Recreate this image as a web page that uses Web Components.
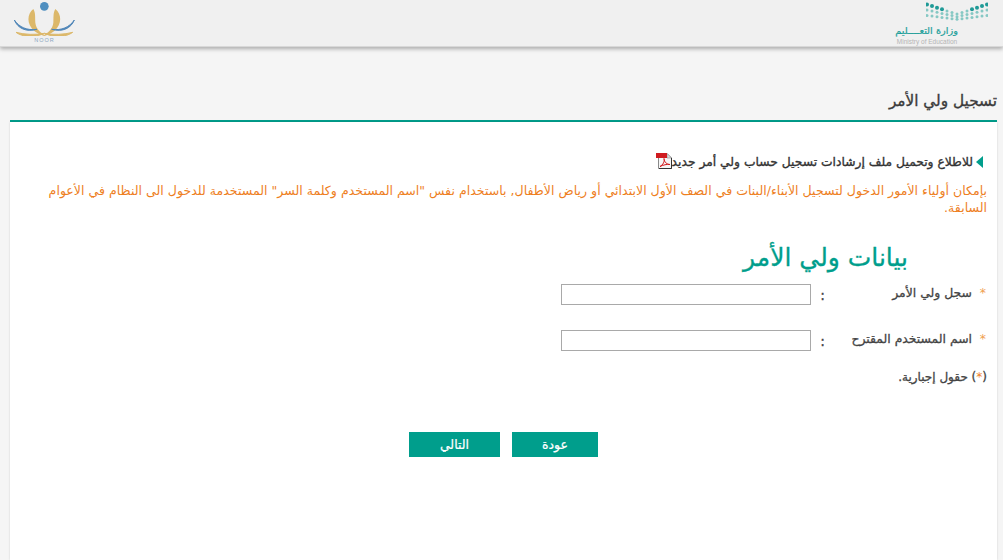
<!DOCTYPE html>
<html lang="ar" dir="rtl">
<head>
<meta charset="utf-8">
<title>تسجيل ولي الأمر</title>
<style>
  html, body { margin: 0; height: 100%; }
  body {
    background: #f5f5f5;
    font-family: "DejaVu Sans", "Noto Sans", sans-serif;
    font-size: 12px;
    color: #3b3b3b;
    overflow: hidden;
  }
</style>
</head>
<body>
<site-header></site-header>
<page-panel heading="تسجيل ولي الأمر">
  <guide-link>للاطلاع وتحميل ملف إرشادات تسجيل حساب ولي أمر جديد</guide-link>
  <p-note>بإمكان أولياء الأمور الدخول لتسجيل الأبناء/البنات في الصف الأول الابتدائي أو رياض الأطفال, باستخدام نفس "اسم المستخدم وكلمة السر" المستخدمة للدخول الى النظام في الأعوام السابقة.</p-note>
  <form-heading>بيانات ولي الأمر</form-heading>
  <form-row label="سجل ولي الأمر"></form-row>
  <form-row label="اسم المستخدم المقترح"></form-row>
  <required-hint></required-hint>
  <form-actions>
    <action-button>عودة</action-button>
    <action-button wide>التالي</action-button>
  </form-actions>
</page-panel>

<script>
class SiteHeader extends HTMLElement {
  connectedCallback() {
    if (this.shadowRoot) return;
    // ministry mark: three rows of dots that dip into a V in the middle
    let dots = '';
    for (let r = 0; r < 3; r++) {
      for (let d = -30; d <= 30; d += 5) {
        const y = 4.5 + r * 5.5 + (30 - Math.abs(d)) * 0.32 * (1 - r * 0.3);
        const edge = Math.abs(d) >= 15;
        const dark = r === 0 && edge;
        dots += `<circle cx="${31 + d}" cy="${y.toFixed(1)}" r="${dark ? 2 : 1.5}" fill="${dark ? '#1f9a97' : '#86c8c4'}"/>`;
      }
    }
    this.attachShadow({ mode: 'open' });
    this.shadowRoot.innerHTML = `
      <style>
        :host {
          display: flex;
          direction: ltr;
          justify-content: space-between;
          align-items: flex-start;
          height: 46px;
          padding: 0 15px 0 12px;
          background: #f0f0f0;
          border-bottom: 1px solid #d8d8d8;
          box-shadow: 0 2px 4px rgba(0, 0, 0, 0.3);
          position: relative;
        }
        .moe { display: flex; flex-direction: column; align-items: flex-end; width: 92px; }
        .moe svg { display: block; }
        .moe .ar { font-size: 9.800px; line-height: 12px; margin-top: 1px; color: #1c9f9a; -webkit-text-stroke: .2px #1c9f9a; direction: rtl; width: 62px; text-align: center; margin-right: 30px; white-space: nowrap; }
        .moe .en { font: 6.500px/9px "Liberation Sans", sans-serif; color: #b5b5b5; width: 62px; margin-right: 30px; text-align: center; white-space: nowrap; }
        .noor { display: flex; flex-direction: column; align-items: center; width: 63px; margin-left: 1px; }
        .noor svg { display: block; }
        .noor b { font: 400 5.500px/7px "Liberation Sans", sans-serif; letter-spacing: 1px; color: #8aa6c0; margin-top: 1px; }
      </style>
      <div class="noor">
        <svg width="64" height="36" viewBox="36 0 192 108">
          <defs>
            <g id="half">
              <path d="M97 27C78 42 76 72 100 93C112 103 122 106 135 108C120 98 105 88 103 68C102 52 104 38 97 27Z" fill="#dcb86a"/>
              <path d="M45 97C65 112 100 114 130 100C105 105 70 104 45 97Z" fill="#dcb86a" stroke="#dcb86a" stroke-width="3"/>
              <path d="M40 60C50 85 75 97 108 88C78 92 55 82 40 60Z" fill="#4f86b8" stroke="#4f86b8" stroke-width="3"/>
            </g>
          </defs>
          <circle cx="130" cy="19" r="13" fill="#4f8fc0"/>
          <use href="#half"/>
          <use href="#half" transform="translate(260) scale(-1,1)"/>
        </svg>
        <b>NOOR</b>
      </div>
      <div class="moe">
        <svg width="62" height="24" viewBox="0 0 62 24">${dots}</svg>
        <div class="ar">وزارة التعــــليم</div>
        <div class="en">Ministry of Education</div>
      </div>
    `;
  }
}

class PagePanel extends HTMLElement {
  connectedCallback() {
    if (this.shadowRoot) return;
    this.attachShadow({ mode: 'open' });
    this.shadowRoot.innerHTML = `
      <style>
        :host { display: block; padding: 45px 6px 0 10px; }
        h1 {
          margin: 0;
          padding: 0 0 9px 0;
          font-size: 15.300px;
          line-height: 19px;
          font-weight: 400;
          -webkit-text-stroke: .35px #3b3b3b;
          color: #3b3b3b;
          border-bottom: 2px solid #009e8c;
        }
        .body {
          box-sizing: border-box;
          background: #fff;
          height: 438px;
          padding: 29px 10px 0 10px;
          box-shadow: 0 0 2px rgba(0, 0, 0, 0.15);
        }
      </style>
      <h1></h1>
      <div class="body"><slot></slot></div>
    `;
    this.shadowRoot.querySelector('h1').textContent = this.getAttribute('heading');
  }
}

class GuideLink extends HTMLElement {
  connectedCallback() {
    if (this.shadowRoot) return;
    this.attachShadow({ mode: 'open' });
    this.shadowRoot.innerHTML = `
      <style>
        :host { display: flex; align-items: center; gap: 3px; height: 22px; padding-right: 4px; font-size: 12.300px; color: #333; -webkit-text-stroke: .35px #333; }
        .arrow { width: 0; height: 0; border: 6px solid transparent; border-left: 0; border-right: 7px solid #009e8c; }
        svg { margin-right: -3px; margin-top: -3px; -webkit-text-stroke: 0; }
      </style>
      <span class="arrow"></span>
      <span><slot></slot></span>
      <svg width="16" height="16" viewBox="0 0 16 16">
        <path d="M2.500.5H11L15.500 5V15.500H2.500Z" fill="#f6f6f6" stroke="#8a8a8a"/>
        <path d="M11 .5V5H15.500Z" fill="#dcdcdc" stroke="#8a8a8a" stroke-width=".6"/>
        <path d="M3 15.500H15.500V5" fill="none" stroke="#333" stroke-width="1"/>
        <rect x="0" y="0" width="11" height="5" fill="#cf1b1f"/>
        <path d="M4 13.500C7 12 9 8 8 5.500C8 9 11 11.500 14 11.500C11 11 7 12 4 13.500Z" fill="none" stroke="#d2181c"/>
      </svg>
    `;
  }
}

class PNote extends HTMLElement {
  connectedCallback() {
    if (this.shadowRoot) return;
    this.attachShadow({ mode: 'open' });
    this.shadowRoot.innerHTML = `
      <style>
        :host { display: block; margin-top: 9px; font-size: 12.570px; line-height: 17px; color: #ee7f1f; }
      </style>
      <slot></slot>
    `;
  }
}

class FormHeading extends HTMLElement {
  connectedCallback() {
    if (this.shadowRoot) return;
    this.attachShadow({ mode: 'open' });
    this.shadowRoot.innerHTML = `
      <style>
        :host { display: block; margin: 24px 79px 8px 0; font-size: 25px; line-height: 36px; color: #009e8c; -webkit-text-stroke: .3px #009e8c; }
      </style>
      <slot></slot>
    `;
  }
}

class FormRow extends HTMLElement {
  connectedCallback() {
    if (this.shadowRoot) return;
    this.attachShadow({ mode: 'open' });
    this.shadowRoot.innerHTML = `
      <style>
        :host { display: flex; align-items: flex-start; height: 46px; font-size: 12.400px; color: #444; }
        .star { width: 15px; color: #f0a050; line-height: 17px; padding-right: 1px; box-sizing: border-box; }
        .label { width: 147px; line-height: 17px; white-space: nowrap; -webkit-text-stroke: .3px #444; }
        .colon { width: 14px; font-size: 14px; line-height: 22px; -webkit-text-stroke: .3px #444; }
        input { width: 248px; height: 19px; box-sizing: content-box; padding: 0; margin: 0; border: 1px solid #a9a9a9; background: #fff; }
      </style>
      <span class="star">*</span>
      <span class="label"></span>
      <span class="colon">:</span>
      <input type="text">
    `;
    this.shadowRoot.querySelector('.label').textContent = this.getAttribute('label');
  }
}

class RequiredHint extends HTMLElement {
  connectedCallback() {
    if (this.shadowRoot) return;
    this.attachShadow({ mode: 'open' });
    this.shadowRoot.innerHTML = `
      <style>
        :host { display: block; margin-top: -7px; font-size: 12px; color: #444; line-height: 17px; -webkit-text-stroke: .3px #444; }
        i { font-style: normal; color: #ee7f1f; -webkit-text-stroke: 0; }
      </style>
      (<i>*</i>) حقول إجبارية.
    `;
  }
}

class FormActions extends HTMLElement {
  connectedCallback() {
    if (this.shadowRoot) return;
    this.attachShadow({ mode: 'open' });
    this.shadowRoot.innerHTML = `
      <style>
        :host { display: flex; gap: 12px; margin: 46px 389px 0 0; }
      </style>
      <slot></slot>
    `;
  }
}

class ActionButton extends HTMLElement {
  connectedCallback() {
    if (this.shadowRoot) return;
    this.attachShadow({ mode: 'open' });
    this.shadowRoot.innerHTML = `
      <style>
        :host { display: block; }
        button {
          display: block;
          width: 86px;
          height: 25px;
          padding: 0;
          border: 0;
          background: #009e8c;
          color: #fff;
          font: 400 12.500px "DejaVu Sans", sans-serif;
          -webkit-text-stroke: .2px #fff;
        }
        :host([wide]) button { width: 91px; }
      </style>
      <button type="button"><slot></slot></button>
    `;
  }
}

customElements.define('site-header', SiteHeader);
customElements.define('page-panel', PagePanel);
customElements.define('guide-link', GuideLink);
customElements.define('p-note', PNote);
customElements.define('form-heading', FormHeading);
customElements.define('form-row', FormRow);
customElements.define('required-hint', RequiredHint);
customElements.define('form-actions', FormActions);
customElements.define('action-button', ActionButton);
</script>
</body>
</html>
